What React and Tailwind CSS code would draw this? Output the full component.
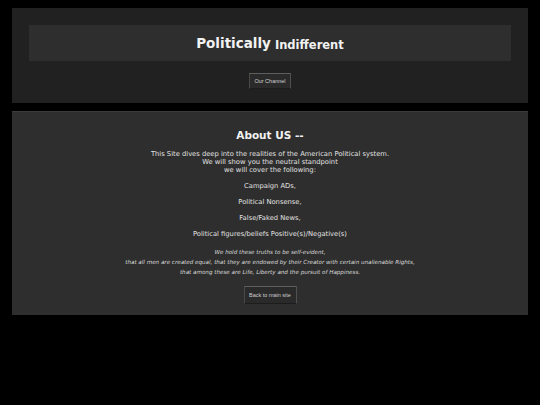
export default function App() {
  const font = { fontFamily: '"DejaVu Sans", Verdana, sans-serif' };
  return (
    <div className="min-h-[405px] bg-black pt-2 px-3 text-white" style={font}>
      <div className="bg-[#212121] px-[17px] pt-[17px] pb-[14px]">
        <div className="bg-[#2e2e2e] h-9 flex items-center justify-center">
          <span className="font-bold text-[13.5px] text-[#f2f2f2]">Politically</span>
          <span className="font-bold text-[11.5px] text-[#f2f2f2] ml-1 mt-[6px]">Indifferent</span>
        </div>
        <div className="flex justify-center mt-3">
          <button className="w-[42px] h-[16px] bg-[#2a2a2a] border border-t-[#5e5e5e] border-r-[#505050] border-l-[#4a4a4a] border-b-[#1c1c1c] text-[5.5px] text-[#cfcfcf] flex items-center justify-center" style={{ fontFamily: '"Liberation Sans", Arial, sans-serif' }}>
            Our Channel
          </button>
        </div>
      </div>
      <div className="mt-2 bg-[#2e2e2e] border-t border-[#3a3a3a] pt-[15px] pb-[11px] flex flex-col items-center text-center">
        <div className="font-bold text-[10.5px] text-[#f2f2f2] leading-[16px]">About US --</div>
        <div className="mt-[7px] text-[6.75px] leading-[8px] text-[#e0e0e0]">
          This Site dives deep into the realities of the American Political system.<br />
          We will show you the neutral standpoint<br />
          we will cover the following:
        </div>
        <div className="mt-[8px] text-[6.75px] leading-[8px] text-[#e0e0e0]">Campaign ADs,</div>
        <div className="mt-[8px] text-[6.75px] leading-[8px] text-[#e0e0e0]">Political Nonsense,</div>
        <div className="mt-[8px] text-[6.75px] leading-[8px] text-[#e0e0e0]">False/Faked News,</div>
        <div className="mt-[8px] text-[6.75px] leading-[8px] text-[#e0e0e0]">Political figures/beliefs Positive(s)/Negative(s)</div>
        <div className="mt-[9px] italic text-[5.6px] leading-[10px] text-[#dadada]">
          We hold these truths to be self-evident,<br />
          that all men are created equal, that they are endowed by their Creator with certain unalienable Rights,<br />
          that among these are Life, Liberty and the pursuit of Happiness.
        </div>
        <button className="mt-[9px] w-[53px] h-[18px] bg-[#2a2a2a] border border-t-[#5e5e5e] border-r-[#505050] border-l-[#4a4a4a] border-b-[#1c1c1c] text-[5.5px] text-[#cfcfcf] flex items-center justify-center" style={{ fontFamily: '"Liberation Sans", Arial, sans-serif' }}>
          Back to main site
        </button>
      </div>
    </div>
  );
}
